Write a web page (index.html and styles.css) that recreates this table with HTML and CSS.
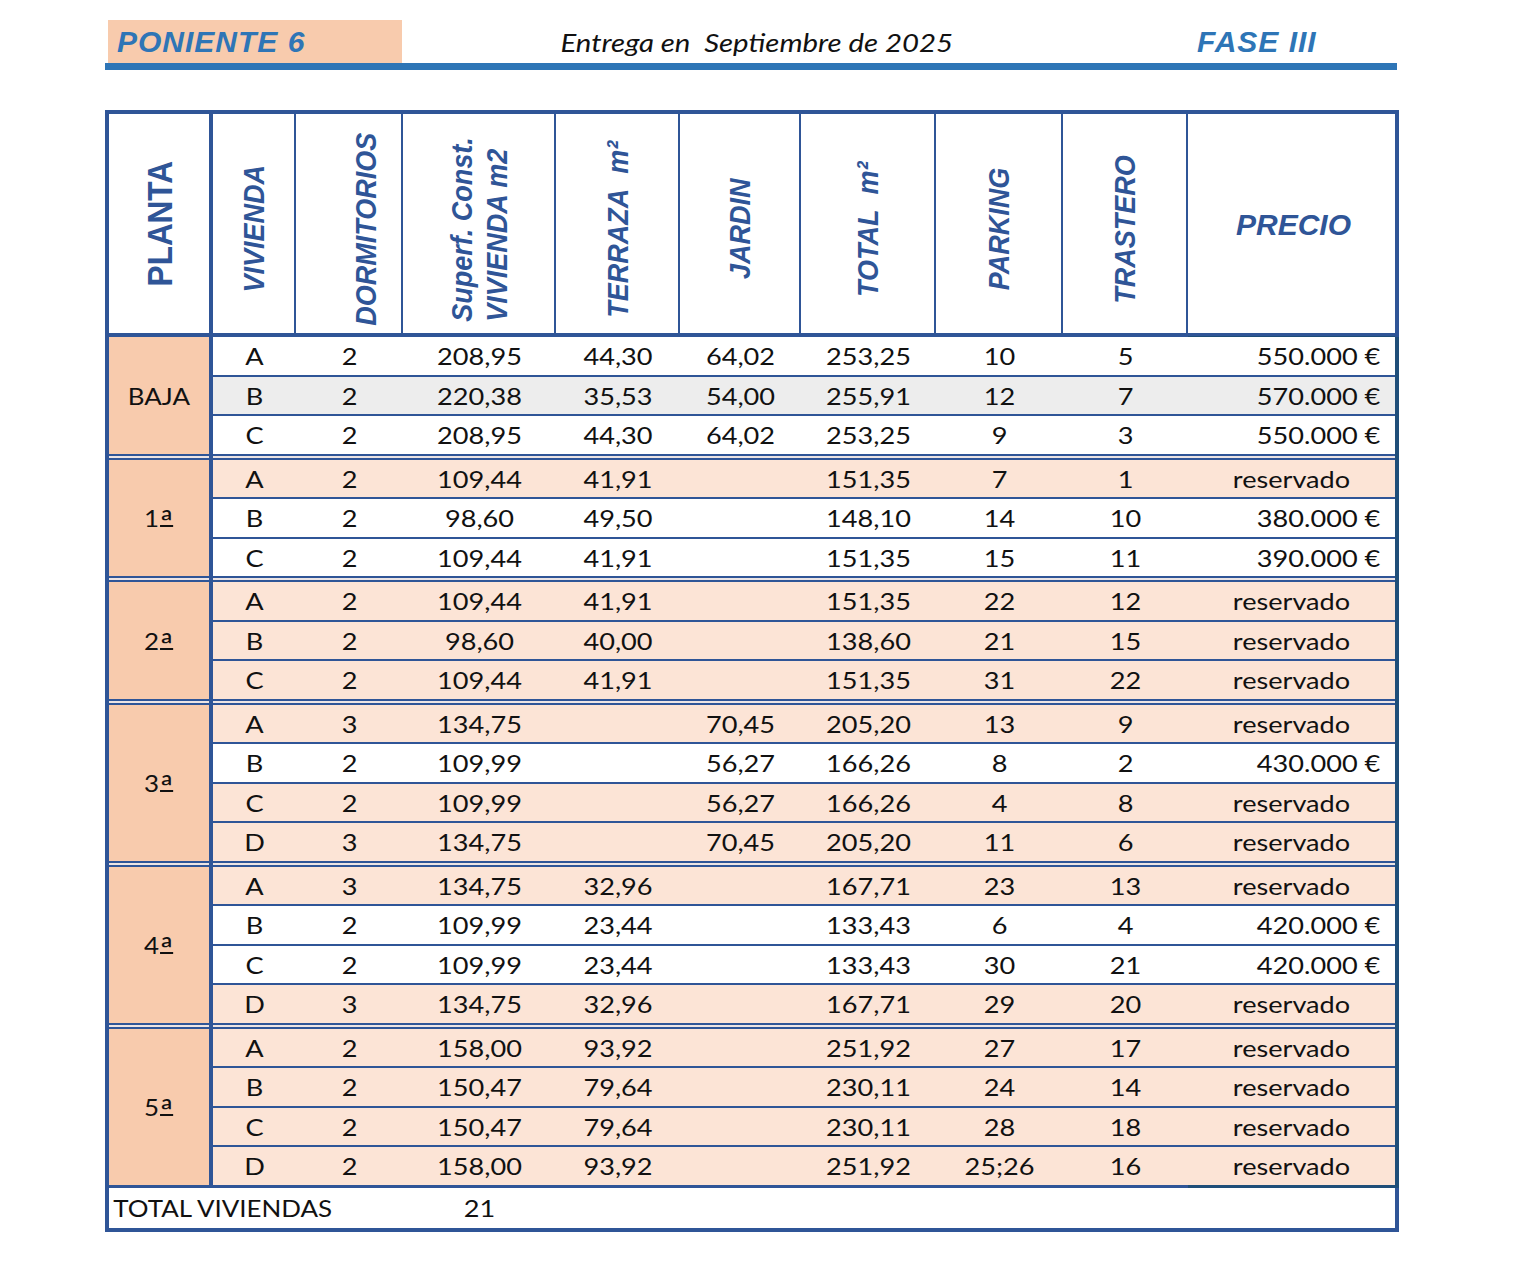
FILE: index.html
```html
<!DOCTYPE html>
<html lang="es">
<head>
<meta charset="utf-8">
<title>Poniente 6 - Fase III</title>
<link rel="stylesheet" href="styles.css">
</head>
<body>
<div class="page">
  <header class="topbar">
    <div class="brand">PONIENTE 6</div>
    <div class="delivery"><span class="dtext">Entrega en&nbsp; Septiembre de 2025</span></div>
    <div class="fase">FASE III</div>
  </header>

  <div class="sheet">
    <div class="head">
      <div class="hc"><span class="vl upright">PLANTA</span></div>
      <div class="hc"><span class="vl">VIVIENDA</span></div>
      <div class="hc c-dorm"><span class="vl">DORMITORIOS</span></div>
      <div class="hc"><span class="vl">Superf. Const.<br>VIVIENDA m2</span></div>
      <div class="hc"><span class="vl">TERRAZA&nbsp;&nbsp;m²</span></div>
      <div class="hc"><span class="vl">JARDIN</span></div>
      <div class="hc"><span class="vl">TOTAL&nbsp;&nbsp;m²</span></div>
      <div class="hc"><span class="vl">PARKING</span></div>
      <div class="hc"><span class="vl">TRASTERO</span></div>
      <div class="hc c-precio"><span class="hl">PRECIO</span></div>
    </div>

    <div class="group">
      <div class="plant"><span class="t">BAJA</span></div>
      <div class="rows">
        <div class="row"><div class="c">A</div><div class="c">2</div><div class="c">208,95</div><div class="c">44,30</div><div class="c">64,02</div><div class="c">253,25</div><div class="c">10</div><div class="c">5</div><div class="c p">550.000 €</div></div>
        <div class="row gray"><div class="c">B</div><div class="c">2</div><div class="c">220,38</div><div class="c">35,53</div><div class="c">54,00</div><div class="c">255,91</div><div class="c">12</div><div class="c">7</div><div class="c p">570.000 €</div></div>
        <div class="row"><div class="c">C</div><div class="c">2</div><div class="c">208,95</div><div class="c">44,30</div><div class="c">64,02</div><div class="c">253,25</div><div class="c">9</div><div class="c">3</div><div class="c p">550.000 €</div></div>
      </div>
    </div>
    <div class="sep"></div>

    <div class="group">
      <div class="plant"><span class="t">1<span class="ord">ª</span></span></div>
      <div class="rows">
        <div class="row pink"><div class="c">A</div><div class="c">2</div><div class="c">109,44</div><div class="c">41,91</div><div class="c"></div><div class="c">151,35</div><div class="c">7</div><div class="c">1</div><div class="c">reservado</div></div>
        <div class="row"><div class="c">B</div><div class="c">2</div><div class="c">98,60</div><div class="c">49,50</div><div class="c"></div><div class="c">148,10</div><div class="c">14</div><div class="c">10</div><div class="c p">380.000 €</div></div>
        <div class="row"><div class="c">C</div><div class="c">2</div><div class="c">109,44</div><div class="c">41,91</div><div class="c"></div><div class="c">151,35</div><div class="c">15</div><div class="c">11</div><div class="c p">390.000 €</div></div>
      </div>
    </div>
    <div class="sep"></div>

    <div class="group">
      <div class="plant"><span class="t">2<span class="ord">ª</span></span></div>
      <div class="rows">
        <div class="row pink"><div class="c">A</div><div class="c">2</div><div class="c">109,44</div><div class="c">41,91</div><div class="c"></div><div class="c">151,35</div><div class="c">22</div><div class="c">12</div><div class="c">reservado</div></div>
        <div class="row pink"><div class="c">B</div><div class="c">2</div><div class="c">98,60</div><div class="c">40,00</div><div class="c"></div><div class="c">138,60</div><div class="c">21</div><div class="c">15</div><div class="c">reservado</div></div>
        <div class="row pink"><div class="c">C</div><div class="c">2</div><div class="c">109,44</div><div class="c">41,91</div><div class="c"></div><div class="c">151,35</div><div class="c">31</div><div class="c">22</div><div class="c">reservado</div></div>
      </div>
    </div>
    <div class="sep"></div>

    <div class="group">
      <div class="plant"><span class="t">3<span class="ord">ª</span></span></div>
      <div class="rows">
        <div class="row pink"><div class="c">A</div><div class="c">3</div><div class="c">134,75</div><div class="c"></div><div class="c">70,45</div><div class="c">205,20</div><div class="c">13</div><div class="c">9</div><div class="c">reservado</div></div>
        <div class="row"><div class="c">B</div><div class="c">2</div><div class="c">109,99</div><div class="c"></div><div class="c">56,27</div><div class="c">166,26</div><div class="c">8</div><div class="c">2</div><div class="c p">430.000 €</div></div>
        <div class="row pink"><div class="c">C</div><div class="c">2</div><div class="c">109,99</div><div class="c"></div><div class="c">56,27</div><div class="c">166,26</div><div class="c">4</div><div class="c">8</div><div class="c">reservado</div></div>
        <div class="row pink"><div class="c">D</div><div class="c">3</div><div class="c">134,75</div><div class="c"></div><div class="c">70,45</div><div class="c">205,20</div><div class="c">11</div><div class="c">6</div><div class="c">reservado</div></div>
      </div>
    </div>
    <div class="sep"></div>

    <div class="group">
      <div class="plant"><span class="t">4<span class="ord">ª</span></span></div>
      <div class="rows">
        <div class="row pink"><div class="c">A</div><div class="c">3</div><div class="c">134,75</div><div class="c">32,96</div><div class="c"></div><div class="c">167,71</div><div class="c">23</div><div class="c">13</div><div class="c">reservado</div></div>
        <div class="row"><div class="c">B</div><div class="c">2</div><div class="c">109,99</div><div class="c">23,44</div><div class="c"></div><div class="c">133,43</div><div class="c">6</div><div class="c">4</div><div class="c p">420.000 €</div></div>
        <div class="row"><div class="c">C</div><div class="c">2</div><div class="c">109,99</div><div class="c">23,44</div><div class="c"></div><div class="c">133,43</div><div class="c">30</div><div class="c">21</div><div class="c p">420.000 €</div></div>
        <div class="row pink"><div class="c">D</div><div class="c">3</div><div class="c">134,75</div><div class="c">32,96</div><div class="c"></div><div class="c">167,71</div><div class="c">29</div><div class="c">20</div><div class="c">reservado</div></div>
      </div>
    </div>
    <div class="sep"></div>

    <div class="group">
      <div class="plant"><span class="t">5<span class="ord">ª</span></span></div>
      <div class="rows">
        <div class="row pink"><div class="c">A</div><div class="c">2</div><div class="c">158,00</div><div class="c">93,92</div><div class="c"></div><div class="c">251,92</div><div class="c">27</div><div class="c">17</div><div class="c">reservado</div></div>
        <div class="row pink"><div class="c">B</div><div class="c">2</div><div class="c">150,47</div><div class="c">79,64</div><div class="c"></div><div class="c">230,11</div><div class="c">24</div><div class="c">14</div><div class="c">reservado</div></div>
        <div class="row pink"><div class="c">C</div><div class="c">2</div><div class="c">150,47</div><div class="c">79,64</div><div class="c"></div><div class="c">230,11</div><div class="c">28</div><div class="c">18</div><div class="c">reservado</div></div>
        <div class="row pink"><div class="c">D</div><div class="c">2</div><div class="c">158,00</div><div class="c">93,92</div><div class="c"></div><div class="c">251,92</div><div class="c">25;26</div><div class="c">16</div><div class="c">reservado</div></div>
      </div>
    </div>
    <div class="rule"></div>

    <div class="total">
      <div class="c tl">TOTAL VIVIENDAS</div>
      <div class="c">21</div>
      <div></div>
    </div>
  </div>
</div>
</body>
</html>
```

FILE: styles.css
```css
html, body {
  margin: 0;
  padding: 0;
  background: #ffffff;
}

.page {
  padding: 20px 0 0 105px;
  width: 1294px;
}

/* ---------- top bar ---------- */
.topbar {
  display: flex;
  align-items: stretch;
  width: 1292px;
  height: 43px;
  border-bottom: 7px solid #2e75b6;
}

.brand {
  margin-left: 3px;
  width: 294px;
  box-sizing: border-box;
  padding-left: 9px;
  background: #f8cbad;
  display: flex;
  align-items: center;
  font-family: "Liberation Sans", Arial, sans-serif;
  font-weight: bold;
  font-style: italic;
  font-size: 30px;
  color: #2e75b6;
  letter-spacing: 1px;
}

.delivery {
  width: 710px;
  display: flex;
  align-items: center;
  justify-content: center;
  font-family: Lato, "Liberation Sans", sans-serif;
  font-style: italic;
  font-size: 26px;
  color: #111;
}

.dtext {
  display: inline-block;
  transform: scaleX(1.13);
  white-space: pre;
}

.fase {
  margin-left: 85px;
  display: flex;
  align-items: center;
  font-family: "Liberation Sans", Arial, sans-serif;
  font-weight: bold;
  font-style: italic;
  font-size: 30px;
  color: #2e75b6;
  letter-spacing: 1px;
}

/* ---------- sheet ---------- */
.sheet {
  margin-top: 40px;
  width: 1294px;
  box-sizing: border-box;
  border: 4px solid #2f5597;
}

.head {
  display: grid;
  grid-template-columns: 104px 83px 107px 153px 124px 121px 135px 127px 125px 1fr;
  height: 223px;
  box-sizing: border-box;
  border-bottom: 4px solid #2f5597;
}

.hc {
  border-right: 2px solid #2f5597;
  display: flex;
  align-items: center;
  justify-content: center;
  color: #2f5597;
  font-family: "Liberation Sans", Arial, sans-serif;
  font-weight: bold;
  font-style: italic;
  font-size: 30px;
}

.hc:first-child {
  border-right-width: 4px;
}

.hc:last-child {
  border-right: 0;
}

.c-dorm {
  padding-left: 33px;
}

.c-precio {
  padding-left: 4px;
  box-shadow: 0 4px 0 #1f4e79;
}

.vl {
  writing-mode: vertical-rl;
  transform: rotate(180deg) scaleY(0.9);
  white-space: nowrap;
  line-height: 35px;
  margin-top: 8px;
}

.vl.upright {
  font-style: normal;
  font-size: 35px;
  margin-top: 0;
  margin-bottom: 4px;
}

.hl {
  white-space: nowrap;
}

/* ---------- body rows ---------- */
.group {
  display: grid;
  grid-template-columns: 104px 1fr;
  box-shadow: 4px 0 0 #1f4e79;
}

.plant {
  background: #f8cbad;
  border-right: 4px solid #2f5597;
  display: flex;
  align-items: center;
  justify-content: center;
}

.plant, .row, .total {
  font-family: Lato, "Liberation Sans", sans-serif;
  font-size: 24px;
  color: #111;
}

.plant .t {
  display: inline-block;
  transform: scaleX(1.08);
}

.ord {
  font-size: 33px;
  line-height: 0;
  vertical-align: -7px;
  margin-left: 1px;
  text-decoration: underline;
  text-decoration-thickness: 2px;
  text-underline-offset: -9px;
}

.rows {
  display: flex;
  flex-direction: column;
}

.row {
  display: grid;
  grid-template-columns: 83px 107px 153px 124px 121px 135px 127px 125px 1fr;
  align-items: center;
  height: 39.5px;
  box-sizing: border-box;
  border-bottom: 2px solid #2f5597;
  background: #ffffff;
}

.row:last-child {
  height: 37.5px;
  border-bottom: 0;
}

.row.gray {
  background: #ededed;
}

.row.pink {
  background: #fce4d6;
}

.c {
  text-align: center;
  white-space: nowrap;
  transform: scaleX(1.13);
}

.c.p {
  text-align: right;
  padding-right: 13px;
  transform-origin: right center;
}

.sep {
  height: 6px;
  background:
    linear-gradient(to right, transparent 100px, #2f5597 100px, #2f5597 104px, transparent 104px),
    linear-gradient(to bottom, #2f5597 0, #2f5597 2px, #ece4e4 2px, #ece4e4 4px, #2f5597 4px, #2f5597 6px);
  box-shadow: 4px 0 0 #1f4e79;
}

.rule {
  height: 3px;
  background: linear-gradient(to right, #2f5597 1079px, #1f4e79 1079px);
  box-shadow: 4px 0 0 #1f4e79;
}

.total {
  display: grid;
  grid-template-columns: 294px 153px 1fr;
  align-items: center;
  height: 40px;
}

.c.tl {
  text-align: left;
  padding-left: 4px;
  transform: scaleX(1.08);
  transform-origin: left center;
}
```
